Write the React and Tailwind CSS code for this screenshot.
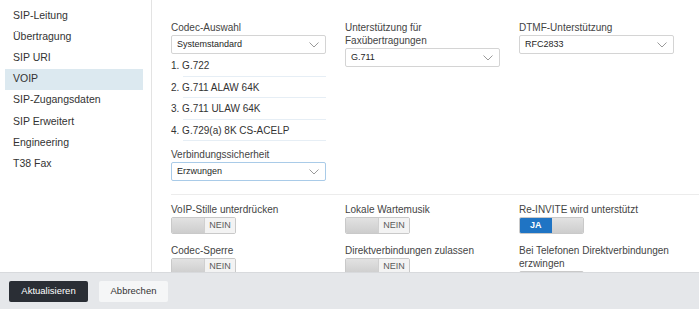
import React from 'react';

const navItems = ['SIP-Leitung', 'Übertragung', 'SIP URI', 'VOIP', 'SIP-Zugangsdaten', 'SIP Erweitert', 'Engineering', 'T38 Fax'];
const codecs = ['1. G.722', '2. G.711 ALAW 64K', '3. G.711 ULAW 64K', '4. G.729(a) 8K CS-ACELP'];

const Chevron = () => (
  <svg width="10" height="6" viewBox="0 0 10 6" className="shrink-0">
    <path d="M0.5 0.5 L5 5 L9.5 0.5" fill="none" stroke="#9a9a9a" strokeWidth="1" />
  </svg>
);

const Select = ({ value, focused }) => (
  <div
    className={`flex h-[19px] items-center justify-between rounded-[2px] border bg-white pl-[5px] pr-[6px] text-[9px] font-medium text-[#1e1e1e] ${
      focused ? 'border-[#a9cbe8]' : 'border-[#d4d4d4]'
    }`}
  >
    <span>{value}</span>
    <Chevron />
  </div>
);

const Label = ({ children }) => (
  <div className="mb-[1px] text-[10px] leading-[13px] text-[#444]">{children}</div>
);

const Toggle = ({ on }) => {
  const knob = <div className="h-full w-[32px] bg-gradient-to-b from-[#e2e2e2] to-[#cdcdcd]" />;
  return (
    <div className="flex h-[17px] w-[65px] overflow-hidden rounded-[2px] border border-[#c9c9c9]">
      {on ? (
        <>
          <div className="flex h-full w-[32px] items-center justify-center bg-[#1f74c4] text-[9px] font-bold text-white">JA</div>
          {knob}
        </>
      ) : (
        <>
          {knob}
          <div className="flex h-full flex-1 items-center justify-center border-l border-[#d0d0d0] bg-[#f3f3f3] text-[9px] font-medium text-[#5a5a5a]">NEIN</div>
        </>
      )}
    </div>
  );
};

export default function App() {
  return (
    <div className="flex h-[309px] w-[699px] flex-col overflow-hidden bg-white" style={{ fontFamily: '"Liberation Sans", Arial, sans-serif' }}>
      <div className="flex h-[272px] overflow-hidden">
        {/* sidebar */}
        <div className="w-[152px] shrink-0 border-r border-[#e3e3e3] pt-[5px]">
          {navItems.map((item) => (
            <div
              key={item}
              className={`ml-[5px] flex h-[21.2px] w-[138px] items-center pl-[8px] text-[10.5px] text-[#333] ${
                item === 'VOIP' ? 'bg-[#dce9f0]' : ''
              }`}
            >
              {item}
            </div>
          ))}
        </div>

        {/* content */}
        <div className="flex-1 pt-[21px]">
          <div className="grid grid-cols-[155px_155px_155px] gap-x-[19px] pl-[19px]">
            <div>
              <Label>Codec-Auswahl</Label>
              <Select value="Systemstandard" />
              <div className="mt-[1px]">
                {codecs.map((c) => (
                  <div key={c} className="relative flex h-[21.5px] items-center text-[10px] text-[#333]">
                    {c}
                    <div className="absolute bottom-0 left-[12px] right-0 h-px bg-[#e6eef5]" />
                  </div>
                ))}
              </div>
              <div className="mt-[7px]">
                <Label>Verbindungssicherheit</Label>
                <Select value="Erzwungen" focused />
              </div>
            </div>
            <div>
              <Label>
                Unterstützung für
                <br />
                Faxübertragungen
              </Label>
              <Select value="G.711" />
            </div>
            <div>
              <Label>DTMF-Unterstützung</Label>
              <Select value="RFC2833" />
            </div>
          </div>

          <div className="ml-[19px] mt-[13px] h-px bg-[#ececec]" />

          <div className="grid grid-cols-[155px_155px_155px] gap-x-[19px] gap-y-[10px] pl-[19px] pt-[8px]">
            <div>
              <Label>VoIP-Stille unterdrücken</Label>
              <Toggle />
            </div>
            <div>
              <Label>Lokale Wartemusik</Label>
              <Toggle />
            </div>
            <div>
              <Label>Re-INVITE wird unterstützt</Label>
              <Toggle on />
            </div>
            <div>
              <Label>Codec-Sperre</Label>
              <Toggle />
            </div>
            <div>
              <Label>Direktverbindungen zulassen</Label>
              <Toggle />
            </div>
            <div>
              <Label>
                Bei Telefonen Direktverbindungen
                <br />
                erzwingen
              </Label>
              <Toggle />
            </div>
          </div>
        </div>
      </div>

      {/* footer */}
      <div className="flex h-[37px] items-center gap-[11px] border-t border-[#d8dadd] bg-[#e5e7ea] pl-[9px]">
        <button className="h-[21px] w-[79px] rounded-[2px] bg-[#2a2e35] text-[9.5px] text-white">Aktualisieren</button>
        <button className="h-[21px] w-[69px] rounded-[2px] bg-[#f5f6f7] text-[9.5px] text-[#333]">Abbrechen</button>
      </div>
    </div>
  );
}
